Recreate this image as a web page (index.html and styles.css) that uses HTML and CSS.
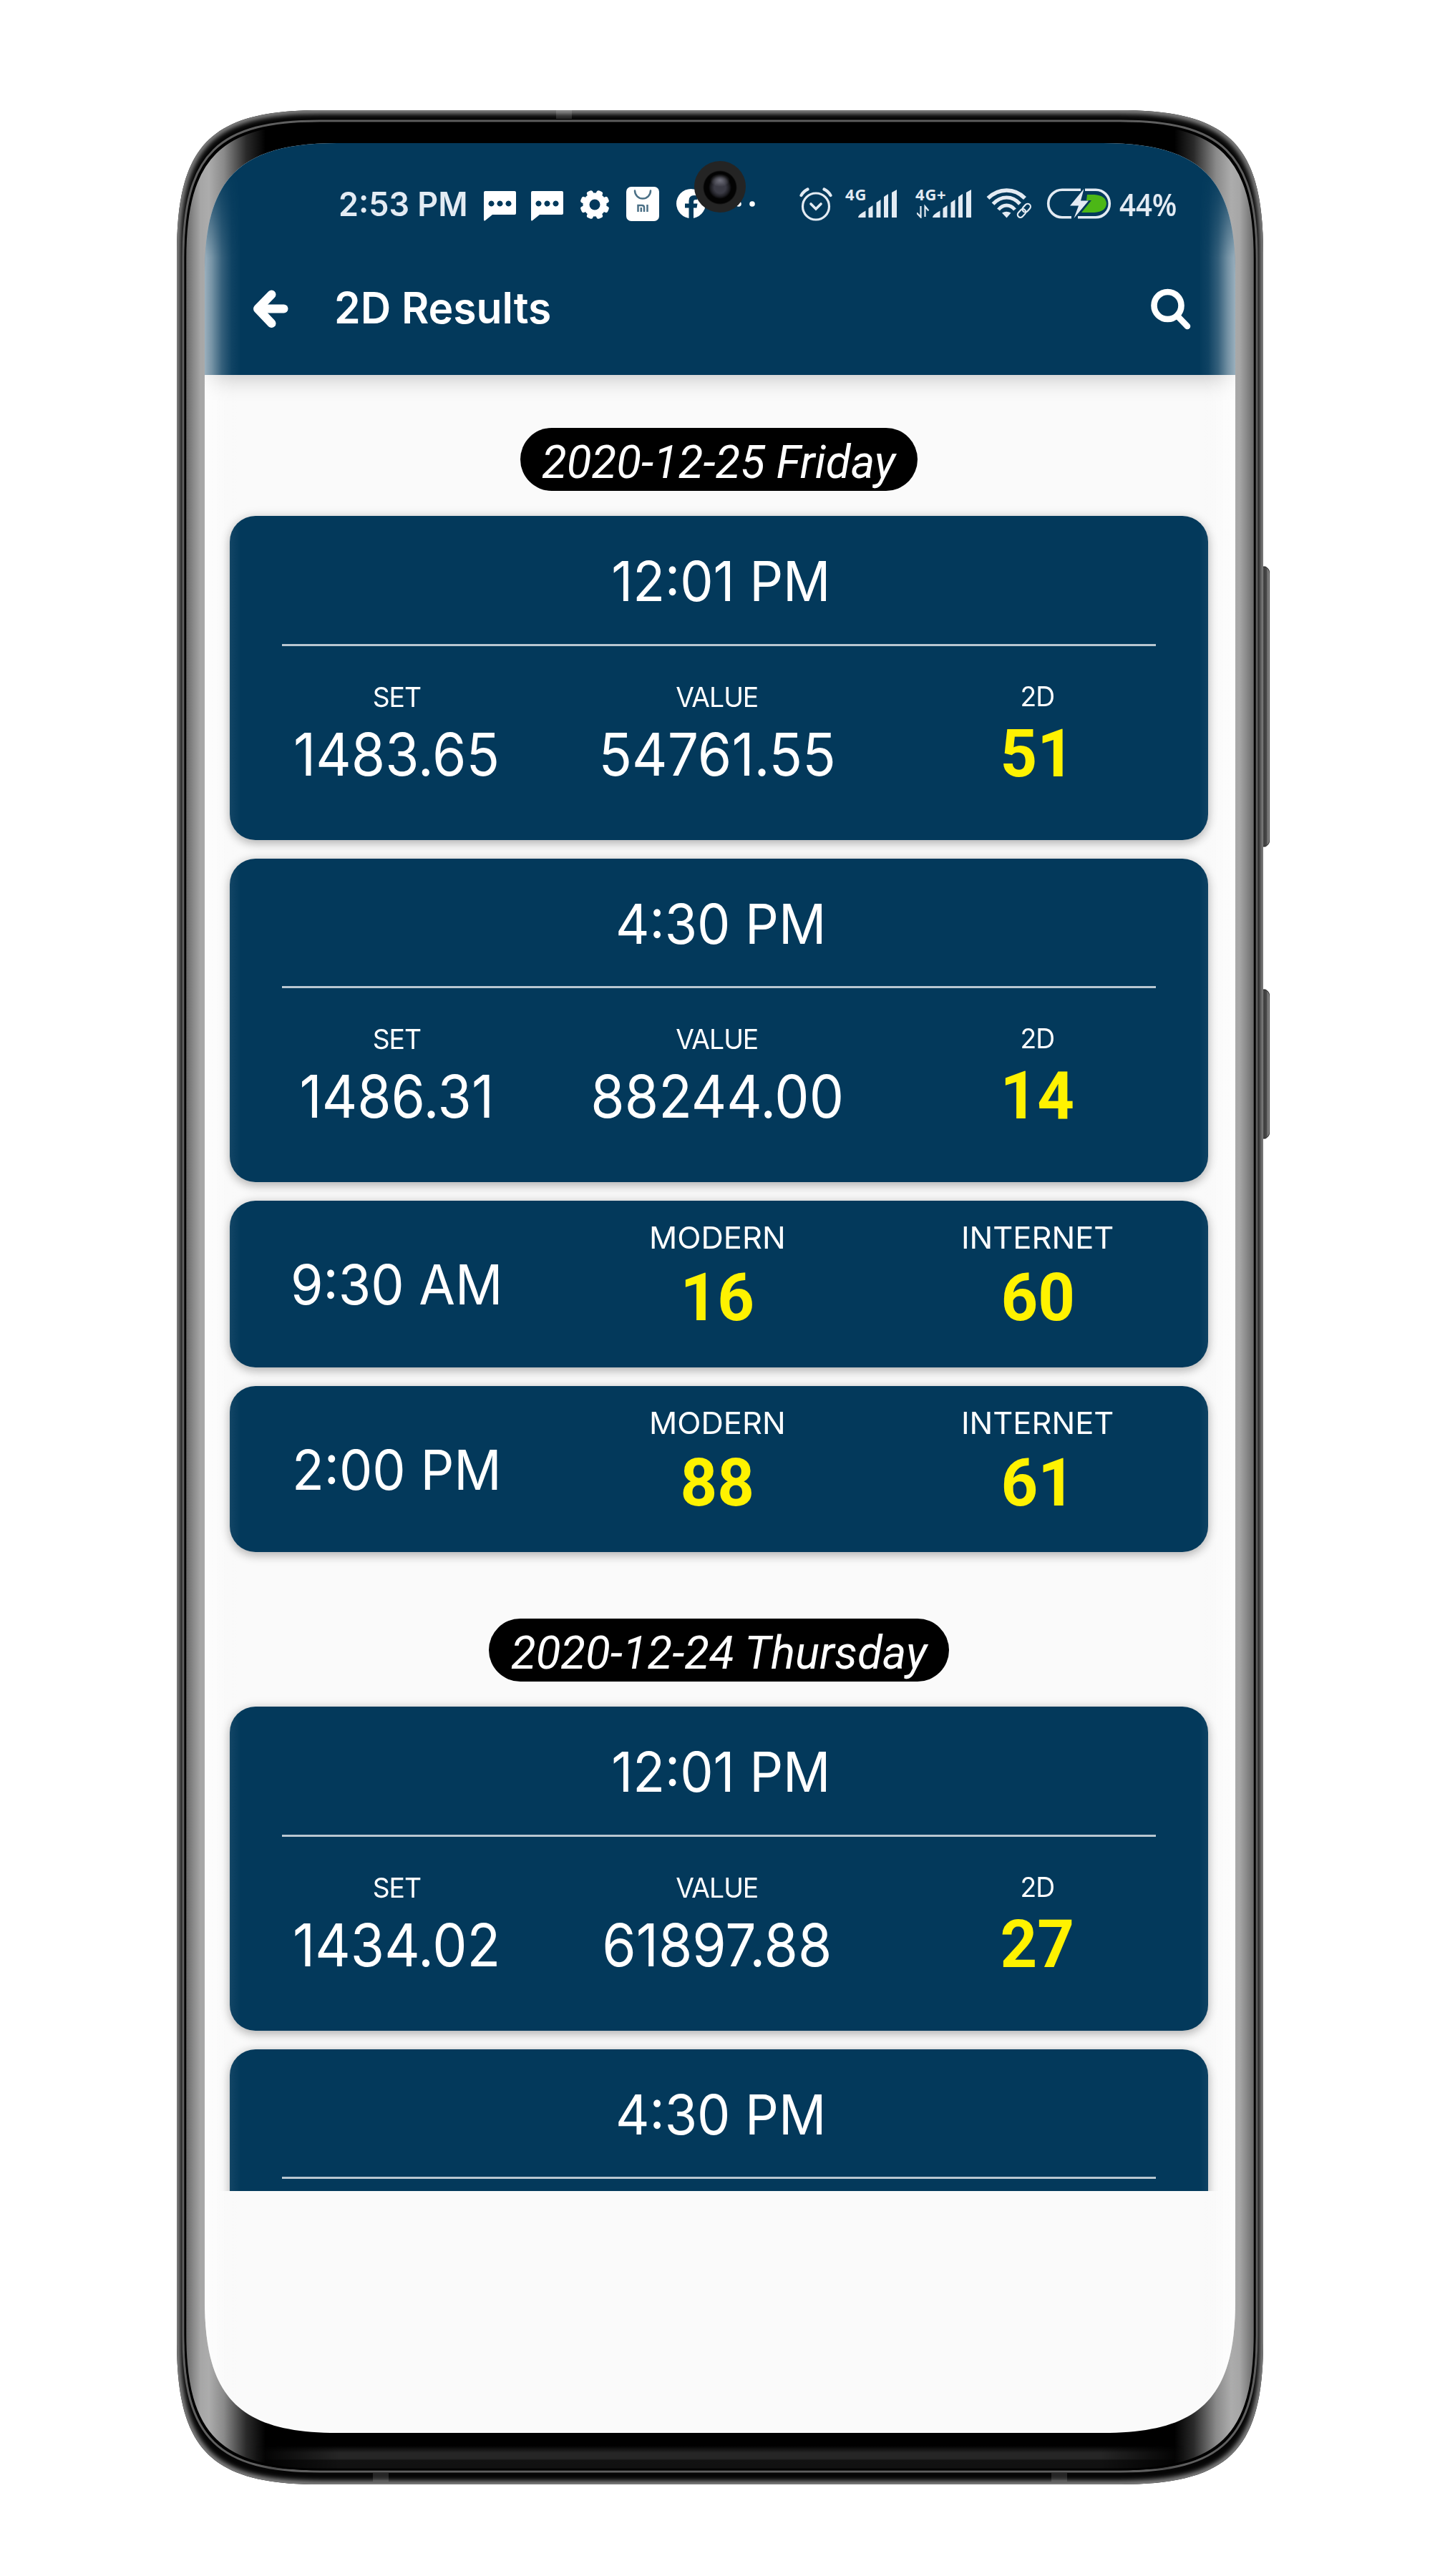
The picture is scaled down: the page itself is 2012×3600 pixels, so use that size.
FILE: index.html
```html
<!DOCTYPE html>
<html lang="en">
<head>
<meta charset="utf-8">
<title>2D Results</title>
<link rel="stylesheet" href="styles.css">
</head>
<body>
<div class="phone">
  <svg class="frame" viewBox="0 0 1527 3318" width="1527" height="3318" aria-hidden="true">
    <defs>
      <path id="body" d="M0 200C0 48 48 0 200 0H1318C1470 0 1518 48 1518 200V3118C1518 3270 1470 3318 1318 3318H200C48 3318 0 3270 0 3118Z"/>
      <path id="rim" d="M9 206C9 60 59 15 200 15H1318C1459 15 1509 60 1509 206V3110C1509 3254 1459 3300 1318 3300H200C59 3300 9 3254 9 3110Z"/>
      <path id="bezel" d="M12 208C12 65 62 18 202 18H1316C1456 18 1506 65 1506 208V3108C1506 3250 1456 3297 1316 3297H202C62 3297 12 3250 12 3108Z"/>
      <clipPath id="bodyClip"><use href="#body"/></clipPath>
      <linearGradient id="curve" gradientUnits="userSpaceOnUse" x1="12" x2="1506" y1="0" y2="0">
        <stop offset="0" stop-color="#656565"/><stop offset=".007" stop-color="#878787"/>
        <stop offset=".014" stop-color="#a6a6a6"/><stop offset=".022" stop-color="#acacac"/><stop offset=".036" stop-color="#8a8a8a"/>
        <stop offset=".057" stop-color="#2a2a2a"/><stop offset=".075" stop-color="#000"/>
        <stop offset=".925" stop-color="#000"/><stop offset=".943" stop-color="#2a2a2a"/>
        <stop offset=".964" stop-color="#8a8a8a"/><stop offset=".978" stop-color="#acacac"/><stop offset=".986" stop-color="#a6a6a6"/>
        <stop offset=".993" stop-color="#878787"/><stop offset="1" stop-color="#656565"/>
      </linearGradient>
      <linearGradient id="chin" x1="0" x2="0" y1="0" y2="1">
        <stop offset="0" stop-color="#000"/><stop offset=".3" stop-color="#262626"/><stop offset=".55" stop-color="#262626"/>
        <stop offset=".62" stop-color="#121212"/><stop offset="1" stop-color="#101010"/>
      </linearGradient>
      <linearGradient id="chinFade" x1="0" x2="1" y1="0" y2="0">
        <stop offset="0" stop-color="#000"/><stop offset=".09" stop-color="#fff"/><stop offset=".91" stop-color="#fff"/><stop offset="1" stop-color="#000"/>
      </linearGradient>
      <mask id="chinMask"><rect x="110" y="3260" width="1298" height="40" fill="url(#chinFade)"/></mask>
      <linearGradient id="key" x1="0" x2="1" y1="0" y2="0">
        <stop offset="0" stop-color="#606060"/><stop offset=".35" stop-color="#3c3c3c"/><stop offset=".65" stop-color="#505050"/><stop offset=".8" stop-color="#8a8a8a"/><stop offset="1" stop-color="#666"/>
      </linearGradient>
      <filter id="soft" x="-5%" y="-5%" width="110%" height="110%"><feGaussianBlur stdDeviation="3"/></filter>
    </defs>
    <path d="M1516 638h5q6 3 6 10v371q0 7-6 10h-5z" fill="url(#key)" stroke="#222" stroke-width="1"/>
    <path d="M1516 1229h5q6 3 6 10v188q0 7-6 10h-5z" fill="url(#key)" stroke="#222" stroke-width="1"/>
    <use href="#body" fill="#050505"/>
    <g clip-path="url(#bodyClip)">
      <use href="#body" fill="none" stroke="#858585" stroke-width="10" filter="url(#soft)"/>
      <g fill="#fff" opacity=".13">
        <rect x="530" y="0" width="22" height="12"/><rect x="274" y="3302" width="22" height="12"/><rect x="1222" y="3302" width="22" height="12"/>
      </g>
    </g>
    <use href="#rim" fill="#000" stroke="#5f5f5f" stroke-width="3"/>
    <use href="#bezel" fill="url(#curve)"/>
    <rect x="110" y="3264" width="1298" height="33" fill="url(#chin)" mask="url(#chinMask)"/>
    <use href="#bezel" fill="none" stroke="#000" stroke-width="2.5"/>
  </svg>

  <div class="screen">
    <header class="top">
      <div class="status">
        <div class="status-left">
          <span class="clock"><span class="sq">2:53 PM</span></span>
          <svg class="msg" width="45" height="42" viewBox="0 0 45 42"><path fill="#fff" fill-rule="evenodd" d="M2 0H43Q45 0 45 2V31Q45 33 43 33H12L1.500 41.500Q0 42 0 40V2Q0 0 2 0ZM10.500 13.500a4 4 0 1 0 .01 0ZM22.500 13.500a4 4 0 1 0 .01 0ZM34.500 13.500a4 4 0 1 0 .01 0Z"/></svg>
          <svg class="msg" width="45" height="42" viewBox="0 0 45 42"><path fill="#fff" fill-rule="evenodd" d="M2 0H43Q45 0 45 2V31Q45 33 43 33H12L1.500 41.500Q0 42 0 40V2Q0 0 2 0ZM10.500 13.500a4 4 0 1 0 .01 0ZM22.500 13.500a4 4 0 1 0 .01 0ZM34.500 13.500a4 4 0 1 0 .01 0Z"/></svg>
          <svg class="gear" width="42" height="42" viewBox="-21 -21 42 42"><g fill="#fff"><circle r="16.500"/><rect x="-4.500" y="-20.500" width="9" height="41" rx="3" transform="rotate(22.500)"/><rect x="-4.500" y="-20.500" width="9" height="41" rx="3" transform="rotate(67.500)"/><rect x="-4.500" y="-20.500" width="9" height="41" rx="3" transform="rotate(112.500)"/><rect x="-4.500" y="-20.500" width="9" height="41" rx="3" transform="rotate(157.500)"/></g><circle r="7.500" fill="#03395b"/></svg>
          <svg class="bag" width="46" height="48" viewBox="0 0 46 48"><rect width="46" height="48" rx="7" fill="#fff"/><g fill="none" stroke="#4b7086" stroke-width="2.500"><path d="M12 5.500a11 11 0 0 0 22 0" stroke-linecap="round"/><path d="M16.500 35V26h5.500q3 0 3 3v6M20.800 29v6M29.500 25v10"/></g></svg>
          <svg class="fb" width="41" height="41" viewBox="0 0 41 41"><circle cx="20.500" cy="20.500" r="20.500" fill="#fff"/><path fill="#03395b" d="M17.500 41V26.500H12V20.500H17.500V16.500Q17.500 9 25 9Q28 9 29.500 9.500V15H27Q24 15 24 18V20.500H29.500L28.500 26.500H24V41Z"/></svg>
          <svg class="dots" width="30" height="10" viewBox="0 0 30 10"><circle cx="5" cy="5" r="3.800" fill="#fff"/><circle cx="24" cy="5" r="3.800" fill="#fff"/></svg>
        </div>
        <div class="status-right">
          <svg class="alarm" width="46" height="47" viewBox="0 0 46 47" fill="none" stroke="#e3ebf3" stroke-linecap="round"><circle cx="23" cy="26.500" r="18.500" stroke-width="3.200"/><path d="M16 23l7 7 7-7" stroke-width="3.600"/><path d="M2.500 11Q6 5 11.500 2.500M43.500 11Q40 5 34.500 2.500" stroke-width="4.200"/></svg>
          <div class="sim"><span class="net">4G</span>
            <svg class="bars" width="54" height="40" viewBox="0 0 54 40" fill="#e3ebf3"><path d="M0 39Q0 35 10.500 29.500V39ZM14.500 26l6-4V39h-6ZM25.500 18l6-4V39h-6ZM36 10l6-4V39h-6ZM47 4l7-4V39h-7Z"/></svg></div>
          <div class="sim plus"><span class="net">4G+</span>
            <svg class="bars" width="76" height="40" viewBox="-22 0 76 40" fill="#e3ebf3"><path d="M0 39Q0 35 10.500 29.500V39ZM14.500 26l6-4V39h-6ZM25.500 18l6-4V39h-6ZM36 10l6-4V39h-6ZM47 4l7-4V39h-7Z"/><path d="M-16.500 23v15.500l-5.500-6M-10.500 38V23.500l5 6" fill="none" stroke="#e3ebf3" stroke-width="2.200"/></svg></div>
          <svg class="wifi" width="64" height="42" viewBox="0 0 64 42" fill="none" stroke="#e3ebf3"><path d="M2.500 14Q14 3 28.500 3T54 14" stroke-width="5.600"/><path d="M9.500 22Q18 13 28.500 13T47 22" stroke-width="5.200"/><path d="M17 30Q22 24 28.500 24T40 30" stroke-width="5"/><path d="M22 34.500Q28 31 34.500 34.500L28.500 41.500Z" fill="#e3ebf3" stroke="none"/><g stroke-width="2.200" transform="rotate(-48 52.500 31)"><rect x="41" y="27.500" width="13" height="8" rx="4"/><rect x="51" y="27.500" width="13" height="8" rx="4"/></g></svg>
          <svg class="battery" width="91" height="43" viewBox="0 0 91 43"><path d="M48 2.200H22A19.300 19.300 0 0 0 22 40.800H35M54 2.200H69A19.300 19.300 0 0 1 69 40.800H44" fill="none" stroke="#e3ebf3" stroke-width="3.600"/><path d="M57 9H67Q83 10 84 21.500Q83 33 67 34H49L63 17H56Z" fill="#4cb716"/><path d="M52.500 1L33 24.500H45L38.500 42L59 17.500H48Z" fill="#e3ebf3"/></svg>
          <span class="percent"><span class="sq">44%</span></span>
        </div>
        <span class="camera"></span>
      </div>
      <div class="appbar">
        <svg class="back" width="50" height="54" viewBox="0 0 50 54" fill="none" stroke="#fff" stroke-linecap="round" stroke-linejoin="round"><path d="M43.500 26.500H14" stroke-width="12"/><path d="M26.500 6.500L7 26.500L26.500 47" stroke-width="12"/></svg>
        <h1 class="title"><span class="sq">2D Results</span></h1>
        <svg class="search" width="56" height="58" viewBox="0 0 56 58" fill="none" stroke="#fff"><circle cx="23.500" cy="24" r="19" stroke-width="8.600"/><path d="M37 38.500L51 53" stroke-width="8.600" stroke-linecap="round"/></svg>
      </div>
    </header>

    <main class="feed">
      <section class="day">
        <h2 class="date"><span class="sq">2020-12-25 Friday</span></h2>
        <article class="card">
          <div class="session"><span class="sq">12:01 PM</span></div>
          <div class="row">
            <div class="cell"><span class="label">SET</span><span class="value"><span class="sq">1483.65</span></span></div>
            <div class="cell"><span class="label">VALUE</span><span class="value"><span class="sq">54761.55</span></span></div>
            <div class="cell two"><span class="label">2D</span><span class="hit">51</span></div>
          </div>
        </article>
        <article class="card">
          <div class="session"><span class="sq">4:30 PM</span></div>
          <div class="row">
            <div class="cell"><span class="label">SET</span><span class="value"><span class="sq">1486.31</span></span></div>
            <div class="cell"><span class="label">VALUE</span><span class="value"><span class="sq">88244.00</span></span></div>
            <div class="cell two"><span class="label">2D</span><span class="hit">14</span></div>
          </div>
        </article>
        <article class="card small">
          <div class="time"><span class="sq">9:30 AM</span></div>
          <div class="cell"><span class="label">MODERN</span><span class="hit">16</span></div>
          <div class="cell"><span class="label">INTERNET</span><span class="hit">60</span></div>
        </article>
        <article class="card small">
          <div class="time"><span class="sq">2:00 PM</span></div>
          <div class="cell"><span class="label">MODERN</span><span class="hit">88</span></div>
          <div class="cell"><span class="label">INTERNET</span><span class="hit">61</span></div>
        </article>
      </section>
      <section class="day">
        <h2 class="date"><span class="sq">2020-12-24 Thursday</span></h2>
        <article class="card">
          <div class="session"><span class="sq">12:01 PM</span></div>
          <div class="row">
            <div class="cell"><span class="label">SET</span><span class="value"><span class="sq">1434.02</span></span></div>
            <div class="cell"><span class="label">VALUE</span><span class="value"><span class="sq">61897.88</span></span></div>
            <div class="cell two"><span class="label">2D</span><span class="hit">27</span></div>
          </div>
        </article>
        <article class="card">
          <div class="session"><span class="sq">4:30 PM</span></div>
          <div class="row"></div>
        </article>
      </section>
    </main>
  </div>
</div>
</body>
</html>
```
FILE: styles.css
```css
* { box-sizing: border-box; }

body {
  margin: 0;
  width: 2012px;
  height: 3600px;
  padding: 154px 0 0 247px;
  background: #fff;
  color: #fff;
  font-family: "Inter", "Liberation Sans", sans-serif;
  overflow: hidden;
}

.phone {
  position: relative;
  width: 1527px;
  height: 3318px;
  padding: 46px 48px 0 39px;
}

.frame { position: absolute; left: 0; top: 0; }

.screen {
  position: relative;
  width: 1440px;
  height: 3200px;
  background: #fafafa;
  clip-path: path("M0 182C0 49 49 0 185 0H1255C1391 0 1440 49 1440 182V3015C1440 3151 1391 3200 1255 3200H185C49 3200 0 3151 0 3015Z");
}

/* light falling off the curved edges of the glass */
.screen::after {
  content: "";
  position: absolute;
  z-index: 2;
  inset: 0;
  background:
    linear-gradient(to right, rgba(255,255,255,.6), rgba(255,255,255,.46) 10px, rgba(255,255,255,.2) 24px, rgba(255,255,255,.05) 38px, transparent 52px),
    linear-gradient(to left, rgba(255,255,255,.6), rgba(255,255,255,.46) 10px, rgba(255,255,255,.2) 24px, rgba(255,255,255,.05) 38px, transparent 52px);
  -webkit-mask-image: linear-gradient(transparent 20px, #000 160px);
  mask-image: linear-gradient(transparent 20px, #000 160px);
}

.sq { display: inline-block; white-space: pre; }

.top {
  position: relative;
  z-index: 1;
  height: 324px;
  background: #03395b;
  box-shadow: 0 4px 30px rgba(0,0,0,.22);
}

.status {
  position: relative;
  height: 170px;
  display: flex;
  justify-content: space-between;
  padding: 0 81px 0 187px;
}
.status-left, .status-right { display: flex; align-items: flex-start; }
.status svg { display: block; flex: none; }

.clock {
  width: 180px;
  margin: 55px 23px 0 0;
  font-size: 46px;
  line-height: 60px;
  font-weight: 600;
  color: #e3ebf3;
}
.clock .sq { transform: scaleX(.975); transform-origin: left; }
.msg { margin: 67px 21px 0 0; }
.gear { margin: 65px 23px 0 2px; }
.bag { margin: 61px 24px 0 0; }
.fb { margin: 64px 0 0; }
.dots { margin: 80px 0 0 41px; }

.camera {
  position: absolute;
  left: 684px;
  top: 25px;
  width: 72px;
  height: 72px;
  border-radius: 50%;
  background:
    radial-gradient(ellipse 14px 9px at 36px 27px, #71717d, rgba(60,60,70,0) 100%),
    radial-gradient(circle at 36px 37px, #3b3b45 0 8px, #1d1d22 13px, #030303 16px 22px, #242424 24px);
}

.alarm { margin: 62px 18px 0 0; }
.sim { position: relative; width: 72px; margin: 65px 26px 0 0; }
.sim.plus { width: 78px; margin-right: 21px; }
.sim .bars { margin-left: auto; }
.net {
  position: absolute;
  left: 0;
  top: -6px;
  font: 700 22px/24px "Noto Sans", sans-serif;
  letter-spacing: .8px;
  color: #e3ebf3;
}
.wifi { margin: 63px 20px 0 0; }
.battery { margin: 63px 11px 0 0; }
.percent {
  width: 81px;
  margin-top: 55px;
  font: 600 44px/60px "Open Sans", sans-serif;
  color: #e3ebf3;
}
.percent .sq { transform: scaleX(.91); transform-origin: left; }

.appbar {
  display: flex;
  align-items: center;
  height: 124px;
  padding: 0 62px 0 67px;
}
.title {
  flex: 1;
  margin: -4px 0 0 64px;
  font-size: 60px;
  line-height: 80px;
  font-weight: 600;
}
.title .sq { transform: scaleX(.98); transform-origin: left; }

.feed {
  height: 2538px;
  padding: 74px 38px 0 35px;
  overflow: hidden;
}

.day { display: flex; flex-direction: column; gap: 26px; margin-bottom: 93px; }

.date {
  align-self: center;
  height: 87.5px;
  margin: 0 0 9.5px;
  padding: 4px 25px 0;
  border-radius: 44px;
  background: #000;
  font: italic 400 65px/88px "Roboto", sans-serif;
}
.date .sq { transform: scaleX(.98); }

.card {
  height: 452.5px;
  flex: none;
  border-radius: 36px;
  background: #03395b;
  box-shadow: 0 5px 14px rgba(0,0,0,.24), 0 0 16px rgba(0,0,0,.1);
}

.session {
  height: 181.5px;
  margin: 0 73px;
  padding: 3px 0 0 6px;
  border-bottom: 3px solid #b9c7d1;
  font-size: 77px;
  line-height: 176px;
  text-align: center;
}
.session .sq, .time .sq { transform: scaleX(.955); }

.row, .small {
  display: grid;
  grid-template-columns: repeat(3, 448px);
  padding-left: 9px;
}
.row { padding-top: 41px; }
.cell { display: flex; flex-direction: column; align-items: center; }
.label { font-size: 38px; line-height: 60px; letter-spacing: -1px; transform: scaleX(.98); }
.value { font-size: 82px; line-height: 102px; }
.value .sq { transform: scaleX(.935); }
.hit {
  position: relative;
  top: 2px;
  font: 700 93px/100px "Roboto", sans-serif;
  color: #fff200;
  transform: scaleX(.97);
}
.two .label { line-height: 58px; }
.two { margin-left: -2px; }

.small { height: 232.5px; }
.small .cell { padding-top: 26px; }
.small .label { font-size: 43px; line-height: 50px; margin-bottom: 8px; letter-spacing: 0; transform: scaleX(1.01); }
.time {
  padding-top: 3px;
  font-size: 77px;
  line-height: 229px;
  text-align: center;
}
```
